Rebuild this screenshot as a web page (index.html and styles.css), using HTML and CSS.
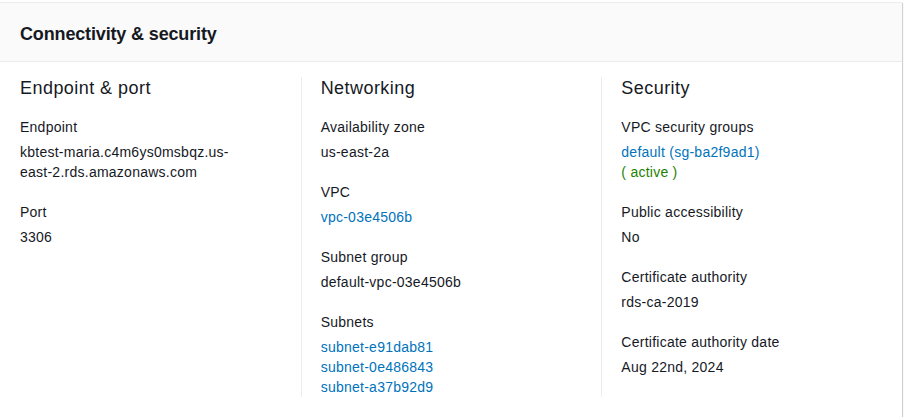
FILE: index.html
```html
<!DOCTYPE html>
<html lang="en">
<head>
<meta charset="utf-8">
<title>Connectivity &amp; security</title>
<link rel="stylesheet" href="styles.css">
</head>
<body>
<div class="card">
  <div class="card-header"><h2>Connectivity &amp; security</h2></div>
  <div class="columns">
    <section class="col">
      <h3>Endpoint &amp; port</h3>
      <div class="field">
        <div class="label">Endpoint</div>
        <div class="value">kbtest-maria.c4m6ys0msbqz.us-<br>east-2.rds.amazonaws.com</div>
      </div>
      <div class="field">
        <div class="label">Port</div>
        <div class="value">3306</div>
      </div>
    </section>
    <section class="col">
      <h3>Networking</h3>
      <div class="field">
        <div class="label">Availability zone</div>
        <div class="value">us-east-2a</div>
      </div>
      <div class="field">
        <div class="label">VPC</div>
        <div class="value"><a href="#">vpc-03e4506b</a></div>
      </div>
      <div class="field">
        <div class="label">Subnet group</div>
        <div class="value">default-vpc-03e4506b</div>
      </div>
      <div class="field">
        <div class="label">Subnets</div>
        <div class="value">
          <a href="#">subnet-e91dab81</a><br>
          <a href="#">subnet-0e486843</a><br>
          <a href="#">subnet-a37b92d9</a>
        </div>
      </div>
    </section>
    <section class="col">
      <h3>Security</h3>
      <div class="field">
        <div class="label">VPC security groups</div>
        <div class="value"><a href="#">default (sg-ba2f9ad1)</a><br><span class="ok">( active )</span></div>
      </div>
      <div class="field">
        <div class="label">Public accessibility</div>
        <div class="value">No</div>
      </div>
      <div class="field">
        <div class="label">Certificate authority</div>
        <div class="value">rds-ca-2019</div>
      </div>
      <div class="field">
        <div class="label">Certificate authority date</div>
        <div class="value">Aug 22nd, 2024</div>
      </div>
    </section>
  </div>
</div>
</body>
</html>
```

FILE: styles.css
```css
* { box-sizing: border-box; }
html, body {
  margin: 0;
  padding: 0;
  background: #ffffff;
}
body {
  font-family: "Liberation Sans", Arial, sans-serif;
  color: #16191f;
  font-size: 14px;
  line-height: 20px;
  letter-spacing: 0.25px;
  padding-top: 2px;
}
.card {
  width: 902px;
  background: #ffffff;
  border-top: 1px solid #eaeded;
  box-shadow: 0 1px 1px 0 rgba(0, 28, 36, 0.3), 1px 1px 1px 0 rgba(0, 28, 36, 0.15);
}
.card-header {
  background: #fafafa;
  border-bottom: 1px solid #eaeded;
  padding: 20px 20px 16px;
}
.card-header h2 {
  margin: 0;
  font-size: 18px;
  line-height: 22px;
  font-weight: 700;
  letter-spacing: -0.15px;
}
.columns {
  display: grid;
  grid-template-columns: 1fr 1fr 1fr;
  padding: 15px 0 20px;
}
.col {
  padding: 0 20px;
}
.col + .col {
  border-left: 1px solid #eaeded;
  padding-left: 19px;
}
.col h3 {
  margin: 0 0 18px;
  font-size: 18px;
  line-height: 22px;
  font-weight: 400;
  letter-spacing: 0.45px;
}
.field + .field {
  margin-top: 20px;
}
.label {
  margin-bottom: 5px;
}
a {
  color: #0073bb;
  text-decoration: none;
}
.ok {
  color: #1d8102;
}
```
